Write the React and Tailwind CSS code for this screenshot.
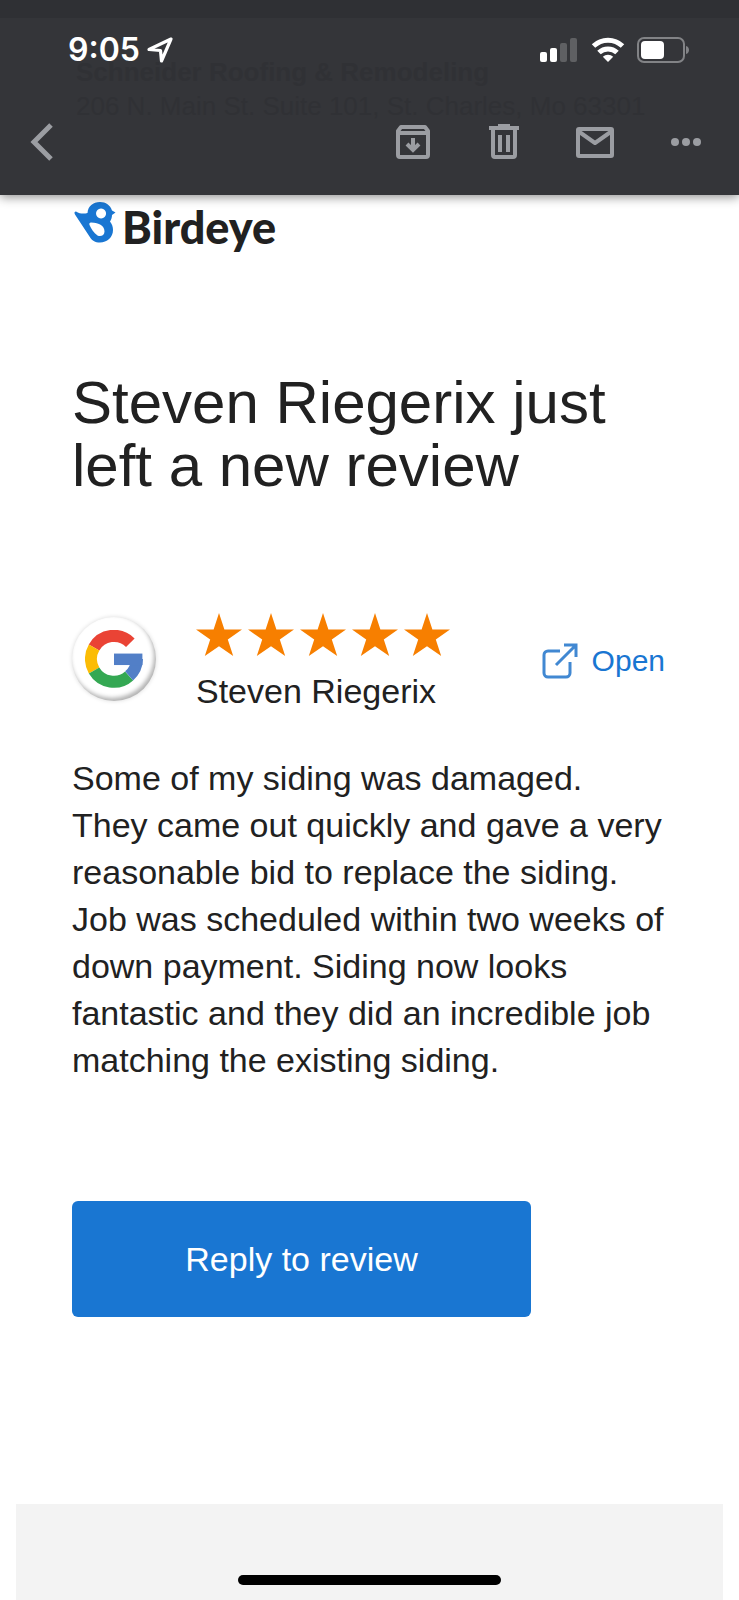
const STAR = 'M23 0l5.400 16.500H46L31.800 26.500l5.400 16.500L23 33.200 8.800 43l5.400-16.500L0 16.500h17.600z'

const REVIEW =
  'Some of my siding was damaged. They came out quickly and gave a very reasonable bid to replace the siding. Job was scheduled within two weeks of down payment. Siding now looks fantastic and they did an incredible job matching the existing siding.'

function StatusBar() {
  return (
    <div className="flex items-center justify-between pt-4 pr-12 pl-[68px]">
      <div className="flex items-center gap-[6px]">
        <span className="font-['Inter',sans-serif] text-[32px] leading-8 font-semibold">9:05</span>
        <svg width="28" height="28" viewBox="0 0 28 28" fill="none" stroke="currentColor" strokeWidth="3.2" strokeLinejoin="round">
          <path d="M25 3L3 13.500l11.500 1L15.500 25z" />
        </svg>
      </div>
      <div className="flex items-center gap-3">
        <svg width="40" height="26" viewBox="0 0 40 26" fill="currentColor">
          <rect x="1" y="15" width="7" height="10" rx="2" />
          <rect x="11" y="11" width="7" height="14" rx="2" />
          <rect x="21" y="6" width="7" height="19" rx="2" className="text-[#5f6063]" />
          <rect x="31" y="1" width="7" height="24" rx="2" className="text-[#5f6063]" />
        </svg>
        <svg width="34" height="26" viewBox="0 0 34 26" fill="none" stroke="currentColor" strokeWidth="5">
          <path d="M2.500 9a21 21 0 0 1 29 0" />
          <path d="M8 15.500a13 13 0 0 1 18 0" />
          <path d="M17 25l-5.200-5.200a7.400 7.400 0 0 1 10.400 0z" fill="currentColor" stroke="none" />
        </svg>
        <svg width="54" height="26" viewBox="0 0 54 26">
          <rect x="1" y="1" width="46" height="24" rx="6" fill="none" stroke="#828386" strokeWidth="2" />
          <rect x="4" y="4" width="23" height="18" rx="4" fill="#fff" />
          <path d="M49 9c4 1 4 7 0 8z" fill="#828386" />
        </svg>
      </div>
    </div>
  )
}

function Toolbar() {
  const button = 'flex h-12 w-12 items-center justify-center'
  return (
    <nav className="flex items-center justify-between pr-[29px] pl-[18px] text-[#9b9da2]">
      <button type="button" aria-label="Back" className={button}>
        <svg width="24" height="40" viewBox="0 0 24 40" fill="none" stroke="currentColor" strokeWidth="5">
          <path d="M21 3L4 20l17 17" />
        </svg>
      </button>
      <div className="flex gap-[43px]">
        <button type="button" aria-label="Archive" className={button}>
          <svg width="36" height="36" viewBox="0 0 36 36" fill="none" stroke="currentColor" strokeWidth="4" strokeLinejoin="round">
            <path d="M3 7l3-4h24l3 4v24a2 2 0 0 1-2 2H5a2 2 0 0 1-2-2zM3 9h30" />
            <path d="M18 14v11M12 20l6 6 6-6" strokeLinejoin="miter" />
          </svg>
        </button>
        <button type="button" aria-label="Delete" className={button}>
          <svg width="32" height="36" viewBox="0 0 32 36" fill="none" stroke="currentColor" strokeWidth="4">
            <path d="M1 4h30M10 2h12M5 4v27a2 2 0 0 0 2 2h18a2 2 0 0 0 2-2V4M12 11v17M20 11v17" />
          </svg>
        </button>
        <button type="button" aria-label="Mark as unread" className={button}>
          <svg width="40" height="34" viewBox="0 0 40 34" fill="none" stroke="currentColor" strokeWidth="4" strokeLinejoin="round">
            <rect x="3" y="4" width="34" height="27" rx="1" />
            <path d="M3 6l17 12L37 6" />
          </svg>
        </button>
        <button type="button" aria-label="More" className={button}>
          <svg width="32" height="10" viewBox="0 0 32 10" fill="currentColor">
            <circle cx="5" cy="5" r="4" />
            <circle cx="16" cy="5" r="4" />
            <circle cx="27" cy="5" r="4" />
          </svg>
        </button>
      </div>
    </nav>
  )
}

function Header() {
  return (
    <header className="relative h-[195px] bg-[#343539] text-white shadow-[0_2px_10px_rgba(0,0,0,0.45)]">
      {/* previous message showing faintly through the bar */}
      <div className="absolute top-[55px] left-[76px] whitespace-nowrap text-[#303135]">
        <p className="text-[26px] leading-[34px] font-bold">Schneider Roofing &amp; Remodeling</p>
        <p className="text-[26px] leading-[34px]">206 N. Main St. Suite 101, St. Charles, Mo 63301</p>
      </div>
      <div className="relative">
        <div className="h-[18px] bg-[#2f3034]" />
        <div className="flex flex-col gap-[52px]">
          <StatusBar />
          <Toolbar />
        </div>
      </div>
    </header>
  )
}

function BirdeyeLogo() {
  return (
    <div className="flex items-start gap-[6px] pl-0.5">
      <svg width="42" height="42" viewBox="0 0 42 42">
        <path
          fill="#1976d2"
          fillRule="evenodd"
          d="M2 10.500c4 2.500 8 2.500 11.500 1.500C14 5 19 1 26 1c6 0 10 3 12 8.500l3.500 2-3.500 2.500c0 3-1 5-2 6.500 2 2.500 3 5.500 3 8.500 0 7.500-6 12.500-13 12.500-5 0-8-2-10.500-6L1 13.500c-1-2-.5-3 1-3zM27 7.500a5 5 0 1 0 .1 0zM17 21.500c-1.500 0-2 1-1.500 2.500 2 4 4 8 8 10.500 3 1.500 7 0 7-4 0-5.500-5-9-13.500-9z"
        />
      </svg>
      <span className="font-['Lato',sans-serif] text-[45px] leading-[52px] font-black text-[#212121]">Birdeye</span>
    </div>
  )
}

function GoogleBadge() {
  return (
    <div className="mt-1 flex h-[84px] w-[84px] items-center justify-center rounded-full bg-white shadow-[inset_-2px_-3px_4px_rgba(0,0,0,0.3),0_0_4px_rgba(0,0,0,0.15)]">
      <svg width="58" height="58" viewBox="0 0 48 48">
        <g fill="none" strokeWidth="10">
          <path stroke="#ea4335" d="M37.500 10.500A19 19 0 0 0 7.500 14.500" />
          <path stroke="#fbbc05" d="M7.500 14.500a19 19 0 0 0 0 19" />
          <path stroke="#34a853" d="M7.500 33.500a19 19 0 0 0 29 4.500" />
          <path stroke="#527fc7" d="M36.500 38A19 19 0 0 0 43 24" />
        </g>
        <path fill="#527fc7" d="M24 19.500h23.500V29H24z" />
      </svg>
    </div>
  )
}

function Reviewer() {
  return (
    <div className="mt-[116px] flex items-start">
      <GoogleBadge />
      <div className="ml-10">
        <div className="flex gap-[6px]" role="img" aria-label="5 out of 5 stars">
          {[1, 2, 3, 4, 5].map((n) => (
            <svg key={n} width="46" height="43" viewBox="0 0 46 43" fill="#f77f00">
              <path d={STAR} />
            </svg>
          ))}
        </div>
        <p className="mt-3 text-[34px] leading-[46px]">Steven Riegerix</p>
      </div>
      <a href="#open" className="mt-7 ml-auto flex items-center gap-[14px] text-[30px] leading-10 text-[#1976d2]">
        <svg width="36" height="36" viewBox="0 0 36 36" fill="none" stroke="#4188d2" strokeWidth="3">
          <path d="M18 8H6a4 4 0 0 0-4 4v18a4 4 0 0 0 4 4h18a4 4 0 0 0 4-4V19M14 22L33 3M22 2h12v12" />
        </svg>
        Open
      </a>
    </div>
  )
}

export default function App() {
  return (
    <div className="flex min-h-screen flex-col bg-white font-['Liberation_Sans',Arial,sans-serif] text-[#212121]">
      <Header />
      <main className="flex-1 pt-[6px] pr-[74px] pl-[72px]">
        <BirdeyeLogo />
        <h1 className="mt-[118px] text-[60px] leading-[63px]">Steven Riegerix just left a new review</h1>
        <Reviewer />
        <p className="mt-[41px] text-[34px] leading-[47px]">{REVIEW}</p>
        <button type="button" className="mt-[117px] h-[116px] w-[459px] rounded-md bg-[#1976d2] text-[34px] text-white">
          Reply to review
        </button>
      </main>
      <footer className="mx-4 flex h-24 items-end justify-center bg-[#f3f3f3] pb-[15px]">
        <div className="h-[10px] w-[263px] rounded-full bg-black" />
      </footer>
    </div>
  )
}
